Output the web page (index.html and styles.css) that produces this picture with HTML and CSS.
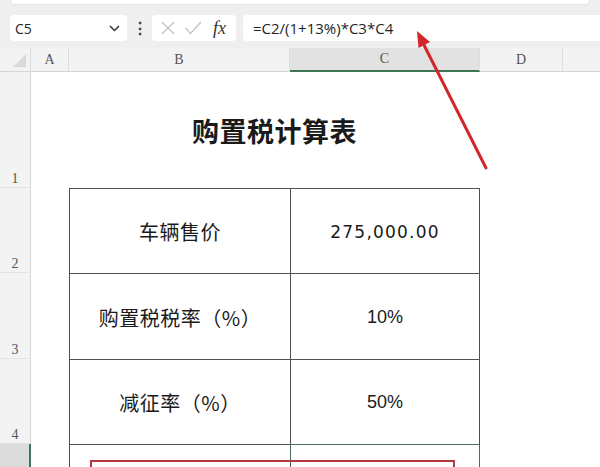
FILE: index.html
```html
<!DOCTYPE html>
<html lang="zh-CN">
<head>
<meta charset="utf-8">
<title>购置税计算表</title>
<link rel="stylesheet" href="styles.css">
</head>
<body>
<div class="app">
  <div class="topstrip"><div class="topbar"></div></div>
  <div class="toolbar">
    <div class="namebox">
      <span class="name">C5</span>
      <svg class="chev" width="11" height="7" viewBox="0 0 11 7"><path d="M1 1 L5.5 5.5 L10 1" fill="none" stroke="#333" stroke-width="1.5"/></svg>
    </div>
    <div class="dots">⋮</div>
    <div class="fxbox">
      <svg width="16" height="16" viewBox="0 0 16 16"><path d="M2 2 L14 14 M14 2 L2 14" stroke="#c4c4c4" stroke-width="1.4" fill="none"/></svg>
      <svg width="18" height="16" viewBox="0 0 18 16"><path d="M1.5 8 L6.5 13.5 L17 2" stroke="#c4c4c4" stroke-width="1.4" fill="none"/></svg>
      <span class="fx">fx</span>
    </div>
    <div class="formula">=C2/(1+13%)*C3*C4</div>
  </div>
  <div class="sheet">
    <div class="corner"><span class="tri"></span></div>
    <div class="colhdr">A</div>
    <div class="colhdr">B</div>
    <div class="colhdr sel">C</div>
    <div class="colhdr">D</div>
    <div class="colhdr last"></div>

    <div class="rowhdr">1</div>
    <div class="cell"></div>
    <div class="cell title">购置税计算表</div>
    <div class="cell"></div>
    <div class="cell"></div>

    <div class="rowhdr">2</div>
    <div class="cell"></div>
    <div class="cell lbl">车辆售价</div>
    <div class="cell val num">275,000.00</div>
    <div class="cell"></div>
    <div class="cell"></div>

    <div class="rowhdr">3</div>
    <div class="cell"></div>
    <div class="cell lbl">购置税税率（%）</div>
    <div class="cell val">10%</div>
    <div class="cell"></div>
    <div class="cell"></div>

    <div class="rowhdr">4</div>
    <div class="cell"></div>
    <div class="cell lbl">减征率（%）</div>
    <div class="cell val">50%</div>
    <div class="cell"></div>
    <div class="cell"></div>

    <div class="rowhdr sel"></div>
    <div class="cell"></div>
    <div class="cell lbl"></div>
    <div class="cell val active"></div>
    <div class="cell"></div>
    <div class="cell"></div>
  </div>
  <div class="redbox"></div>
  <svg class="arrow" width="600" height="467" viewBox="0 0 600 467">
    <line x1="486" y1="168" x2="423" y2="43" stroke="#d2282c" stroke-width="3" stroke-linecap="round"/>
    <polygon points="417,31 430,42 418.5,48" fill="#d2282c"/>
  </svg>
</div>
</body>
</html>
```
FILE: styles.css
```css
* { box-sizing: border-box; }
html, body { margin: 0; padding: 0; }
body {
  width: 600px;
  height: 467px;
  overflow: hidden;
  background: #ffffff;
  font-family: "Liberation Sans", Arial, sans-serif;
}
.app {
  position: relative;
  width: 600px;
  height: 467px;
  overflow: hidden;
  background: #fff;
}
.topstrip {
  height: 5px;
  background: #efefef;
  padding: 0 10px;
}
.topbar {
  height: 5px;
  background: #fff;
  border: 1px solid #e2e2e2;
  border-top: none;
  border-radius: 0 0 6px 6px;
}
.toolbar {
  height: 43px;
  background: #efefef;
  display: flex;
  align-items: flex-start;
  padding: 10px 0 0 10px;
}
.namebox {
  width: 117px;
  height: 26px;
  background: #fff;
  border-radius: 4px;
  display: flex;
  align-items: center;
  justify-content: space-between;
  padding: 0 7px 0 5px;
}
.name {
  font-family: "Open Sans", "Liberation Sans", sans-serif;
  font-size: 14px;
  color: #1f1f1f;
}
.dots {
  width: 25px;
  height: 26px;
  display: flex;
  align-items: center;
  justify-content: center;
  font-size: 16px;
  font-weight: bold;
  color: #444;
}
.fxbox {
  width: 84px;
  height: 26px;
  background: #fff;
  border-radius: 4px;
  display: flex;
  align-items: center;
  padding: 0 0 0 8px;
  gap: 8px;
}
.fx {
  font-family: "Liberation Serif", "DejaVu Serif", serif;
  font-style: italic;
  font-size: 18px;
  color: #333;
  margin-left: 3px;
}
.formula {
  margin-left: 7px;
  flex: 1;
  height: 26px;
  background: #fff;
  border-radius: 4px 0 0 4px;
  display: flex;
  align-items: center;
  padding-left: 10px;
  font-family: "Open Sans", "Liberation Sans", sans-serif;
  font-size: 15px;
  color: #1f1f1f;
}
.sheet {
  display: grid;
  grid-template-columns: 31px 38px 221px 190px 83px 37px;
  grid-template-rows: 24px 116px 85px 86px 85px 40px;
}
.corner {
  background: #f3f3f3;
  border-right: 1px solid #dcdcdc;
  border-bottom: 1px solid #d6d6d6;
  position: relative;
}
.tri {
  position: absolute;
  right: 4px;
  bottom: 4px;
  width: 0;
  height: 0;
  border-left: 13px solid transparent;
  border-bottom: 13px solid #dadada;
}
.colhdr {
  background: #f3f3f3;
  border-right: 1px solid #dedede;
  border-bottom: 1px solid #d6d6d6;
  display: flex;
  align-items: center;
  justify-content: center;
  font-family: "Liberation Serif", "DejaVu Serif", serif;
  font-size: 14px;
  color: #555;
}
.colhdr.sel {
  background: #e2e2e2;
  border-bottom: 2px solid #3f7355;
}
.colhdr.last { border-right: none; }
.rowhdr {
  background: #f3f3f3;
  border-right: 1px solid #d6d6d6;
  border-bottom: 1px solid #e4e4e4;
  display: flex;
  align-items: flex-end;
  justify-content: center;
  font-family: "Liberation Serif", "DejaVu Serif", serif;
  font-size: 14px;
  color: #555;
}
.rowhdr.sel {
  background: #dcdcdc;
  border-right: 2px solid #3f7355;
}
.cell {
  background: #fff;
  display: flex;
  align-items: center;
  justify-content: center;
  color: #1a1a1a;
}
.title {
  grid-column: span 2;
  font-family: "Noto Sans CJK SC", "Liberation Sans", sans-serif;
  font-weight: bold;
  font-size: 27px;
  letter-spacing: 0.5px;
}
.lbl {
  border-left: 1px solid #4f4f4f;
  border-top: 1px solid #4f4f4f;
  font-family: "Noto Sans CJK SC", "Liberation Sans", sans-serif;
  font-size: 20px;
  letter-spacing: 0.5px;
  padding-top: 1px;
}
.val {
  border-left: 1px solid #4f4f4f;
  border-right: 1px solid #4f4f4f;
  border-top: 1px solid #4f4f4f;
  font-family: "Liberation Sans", Arial, sans-serif;
  font-size: 18px;
  padding-top: 1px;
}
.val.num {
  font-family: "DejaVu Sans", "Liberation Sans", sans-serif;
  font-size: 17px;
  letter-spacing: 1.2px;
}
.val.active {
  border-color: #4d6b5c;
}
.redbox {
  position: absolute;
  left: 90px;
  top: 460px;
  width: 365px;
  height: 30px;
  border: 2px solid #b33a3e;
}
.arrow {
  position: absolute;
  left: 0;
  top: 0;
  pointer-events: none;
}
```
